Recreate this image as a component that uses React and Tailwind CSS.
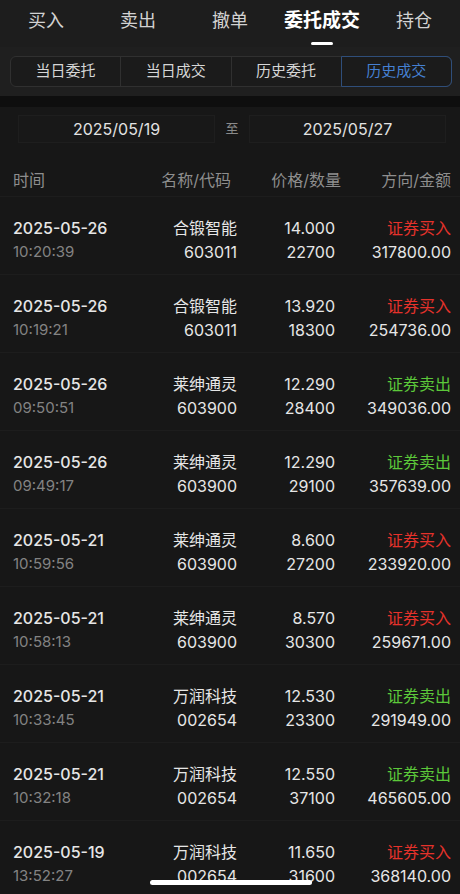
import React from "react";

const tabs = ["买入", "卖出", "撤单", "委托成交", "持仓"];
const segments = ["当日委托", "当日成交", "历史委托", "历史成交"];

const trades = [
  { date: "2025-05-26", time: "10:20:39", name: "合锻智能", code: "603011", price: "14.000", qty: "22700", dir: "buy", amount: "317800.00" },
  { date: "2025-05-26", time: "10:19:21", name: "合锻智能", code: "603011", price: "13.920", qty: "18300", dir: "buy", amount: "254736.00" },
  { date: "2025-05-26", time: "09:50:51", name: "莱绅通灵", code: "603900", price: "12.290", qty: "28400", dir: "sell", amount: "349036.00" },
  { date: "2025-05-26", time: "09:49:17", name: "莱绅通灵", code: "603900", price: "12.290", qty: "29100", dir: "sell", amount: "357639.00" },
  { date: "2025-05-21", time: "10:59:56", name: "莱绅通灵", code: "603900", price: "8.600", qty: "27200", dir: "buy", amount: "233920.00" },
  { date: "2025-05-21", time: "10:58:13", name: "莱绅通灵", code: "603900", price: "8.570", qty: "30300", dir: "buy", amount: "259671.00" },
  { date: "2025-05-21", time: "10:33:45", name: "万润科技", code: "002654", price: "12.530", qty: "23300", dir: "sell", amount: "291949.00" },
  { date: "2025-05-21", time: "10:32:18", name: "万润科技", code: "002654", price: "12.550", qty: "37100", dir: "sell", amount: "465605.00" },
  { date: "2025-05-19", time: "13:52:27", name: "万润科技", code: "002654", price: "11.650", qty: "31600", dir: "buy", amount: "368140.00" },
];

const TradeRow = ({ t }) => (
  <div className="flex h-[78px] border-b border-[#1d1d1d] pl-[13px] pr-[9px] pt-[19px] text-[16px] leading-6 text-[#e6e6e6]">
    <div className="w-[124px]">
      <div className="font-medium">{t.date}</div>
      <div className="text-[15px] text-[#838383]">{t.time}</div>
    </div>
    <div className="w-[100px] text-right">
      <div>{t.name}</div>
      <div>{t.code}</div>
    </div>
    <div className="w-[98px] text-right">
      <div>{t.price}</div>
      <div>{t.qty}</div>
    </div>
    <div className="w-[116px] text-right">
      <div className={t.dir === "buy" ? "text-[#e5322b]" : "text-[#5cc83a]"}>
        {t.dir === "buy" ? "证券买入" : "证券卖出"}
      </div>
      <div>{t.amount}</div>
    </div>
  </div>
);

const App = () => {
  return (
    <div
      className="relative h-[894px] w-[460px] overflow-hidden bg-[#171717]"
      style={{ fontFamily: 'Inter, "Noto Sans CJK SC", sans-serif' }}
    >
      {/* top tabs */}
      <div className="grid h-[47px] grid-cols-5 bg-[#1d1d1d]">
        {tabs.map((tab, i) => (
          <div key={tab} className="relative flex justify-center pt-[8px]">
            <span
              className={
                i === 3
                  ? "text-[19px] font-semibold leading-[26px] text-white"
                  : "text-[18px] leading-[26px] text-[#d2d2d2]"
              }
            >
              {tab}
            </span>
            {i === 3 && (
              <div className="absolute left-1/2 top-[42px] h-[3px] w-[22px] -translate-x-1/2 rounded-full bg-white" />
            )}
          </div>
        ))}
      </div>

      {/* segmented control */}
      <div className="h-[49px] bg-[#1f1f1f] pl-[10px] pr-[8px] pt-[9px]">
        <div className="flex h-[31px] rounded-md border border-[#303030] bg-[#1b1b1b]">
          {segments.map((s, i) => (
            <div
              key={s}
              className={
                i === 3
                  ? "flex flex-1 items-center justify-center rounded-r-md border border-[#2f4e7a] text-[15px] text-[#4580d2] -m-px"
                  : "flex flex-1 items-center justify-center border-r border-[#303030] text-[15px] text-[#d6d6d6]"
              }
            >
              {s}
            </div>
          ))}
        </div>
      </div>

      <div className="h-[11px] bg-[#0e0e0e]" />

      {/* date range */}
      <div className="flex items-center pl-[18px] pr-[14px] pt-[8px]">
        <div className="flex h-[28px] w-[197px] items-center justify-center border border-[#1e1e1e] bg-[#181818] text-[16px] text-[#e2e2e2]">
          2025/05/19
        </div>
        <div className="flex w-[34px] justify-center text-[13px] text-[#8a8a8a]">至</div>
        <div className="flex h-[28px] w-[197px] items-center justify-center border border-[#1e1e1e] bg-[#181818] text-[16px] text-[#e2e2e2]">
          2025/05/27
        </div>
      </div>

      {/* header */}
      <div className="mt-[25px] flex h-[29px] border-b border-[#1d1d1d] pl-[13px] pr-[9px] text-[16px] leading-6 text-[#8e8e8e]">
        <div className="w-[118px]">时间</div>
        <div className="w-[100px] text-right">名称/代码</div>
        <div className="w-[110px] text-right">价格/数量</div>
        <div className="w-[110px] text-right">方向/金额</div>
      </div>

      {trades.map((t, i) => (
        <TradeRow key={i} t={t} />
      ))}

      <div className="absolute bottom-[9px] left-[150px] h-[5px] w-[162px] rounded-full bg-white" />
    </div>
  );
};

export default App;
